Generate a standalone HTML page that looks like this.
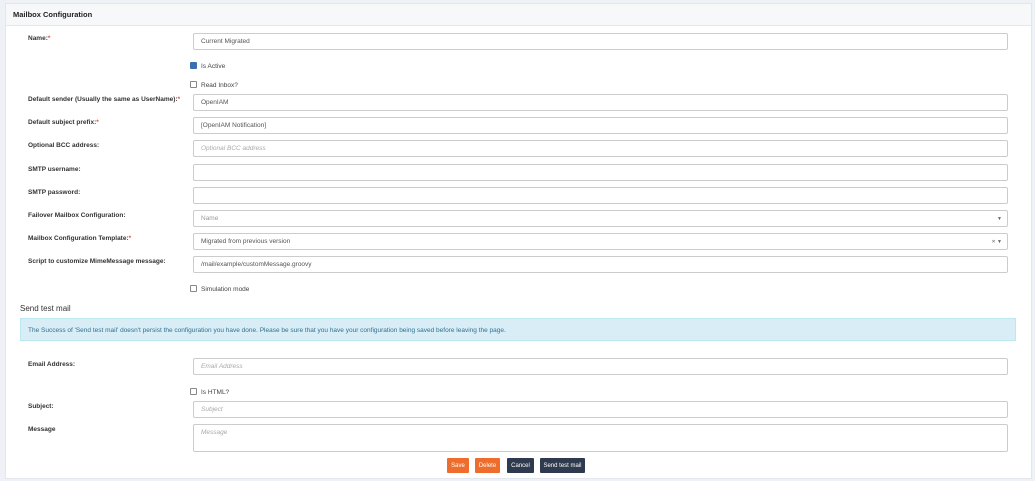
<!DOCTYPE html><html><head><style>
body{margin:0;background:#eef1f5;font-family:"Liberation Sans",sans-serif;width:1035px;height:481px;overflow:hidden;position:relative}
.card{position:absolute;left:5px;top:3px;width:1025px;height:474px;background:#fff;border:1px solid #e3e6ea}
.hd{position:absolute;left:0;top:0;right:0;height:21px;background:#f7f8fa;border-bottom:1px solid #e5e7eb;font-size:7.5px;font-weight:bold;color:#222;line-height:21px;padding-left:7px}
.l{position:absolute;left:22px;font-size:6.5px;font-weight:bold;color:#333}
.l i{color:#d9534f;font-style:normal}
.in{position:absolute;left:187px;width:806px;height:15px;border:1px solid #ccc;border-radius:2px;font-size:6.5px;color:#555;line-height:16px;padding-left:7px;box-sizing:content-box}
.ph{color:#aaa;font-style:italic}
.cb{position:absolute;left:184px;font-size:6.5px;color:#444}
.cb span{display:inline-block;width:5px;height:5px;border:1px solid #888;border-radius:1px;vertical-align:-1px;margin-right:4px;background:#fff}
.cb span.on{background:#3a6fb0;border-color:#3a6fb0}
.arr{position:absolute;right:5px;top:0;font-size:5px;color:#666}
.btn{position:absolute;top:454px;height:15px;line-height:16px;font-size:6px;color:#fff;text-align:center;border-radius:1px}
</style></head><body><div class="card">
<div class="hd">Mailbox Configuration</div>
<div class="l" style="top:31px">Name:<i>*</i></div><div class="in" style="top:29px">Current Migrated</div>
<div class="cb" style="top:58px"><span class="on"></span>Is Active</div>
<div class="cb" style="top:77px"><span></span>Read Inbox?</div>
<div class="l" style="top:92px">Default sender (Usually the same as UserName):<i>*</i></div><div class="in" style="top:90px">OpenIAM</div>
<div class="l" style="top:115px">Default subject prefix:<i>*</i></div><div class="in" style="top:113px">[OpenIAM Notification]</div>
<div class="l" style="top:138px">Optional BCC address:</div><div class="in ph" style="top:136px">Optional BCC address</div>
<div class="l" style="top:162px">SMTP username:</div><div class="in" style="top:160px"></div>
<div class="l" style="top:185px">SMTP password:</div><div class="in" style="top:183px"></div>
<div class="l" style="top:208px">Failover Mailbox Configuration:</div><div class="in" style="top:206px;color:#999">Name<span class="arr">▼</span></div>
<div class="l" style="top:231px">Mailbox Configuration Template:<i>*</i></div><div class="in" style="top:229px">Migrated from previous version<span class="arr">✕ ▼</span></div>
<div class="l" style="top:254px">Script to customize MimeMessage message:</div><div class="in" style="top:252px">/mail/example/customMessage.groovy</div>
<div class="cb" style="top:281px"><span></span>Simulation mode</div>
<div style="position:absolute;left:14px;top:300px;font-size:8px;color:#333">Send test mail</div>
<div style="position:absolute;left:14px;top:314px;height:23px;background:#d9edf7;border:1px solid #bce8f1;font-size:6.5px;color:#31708f;line-height:23px;padding-left:7px;box-sizing:border-box;width:996px">The Success of 'Send test mail' doesn't persist the configuration you have done. Please be sure that you have your configuration being saved before leaving the page.</div>
<div class="l" style="top:357px">Email Address:</div><div class="in ph" style="top:354px">Email Address</div>
<div class="cb" style="top:384px"><span></span>Is HTML?</div>
<div class="l" style="top:399px">Subject:</div><div class="in ph" style="top:397px">Subject</div>
<div class="l" style="top:422px">Message</div><div class="in ph" style="top:420px;height:26px;line-height:16px">Message</div>
<div class="btn" style="left:441px;width:22px;background:#ee6d2c">Save</div>
<div class="btn" style="left:469px;width:25px;background:#ee6d2c">Delete</div>
<div class="btn" style="left:501px;width:27px;background:#2f3a4f">Cancel</div>
<div class="btn" style="left:534px;width:45px;background:#2f3a4f">Send test mail</div>
</div></body></html>
